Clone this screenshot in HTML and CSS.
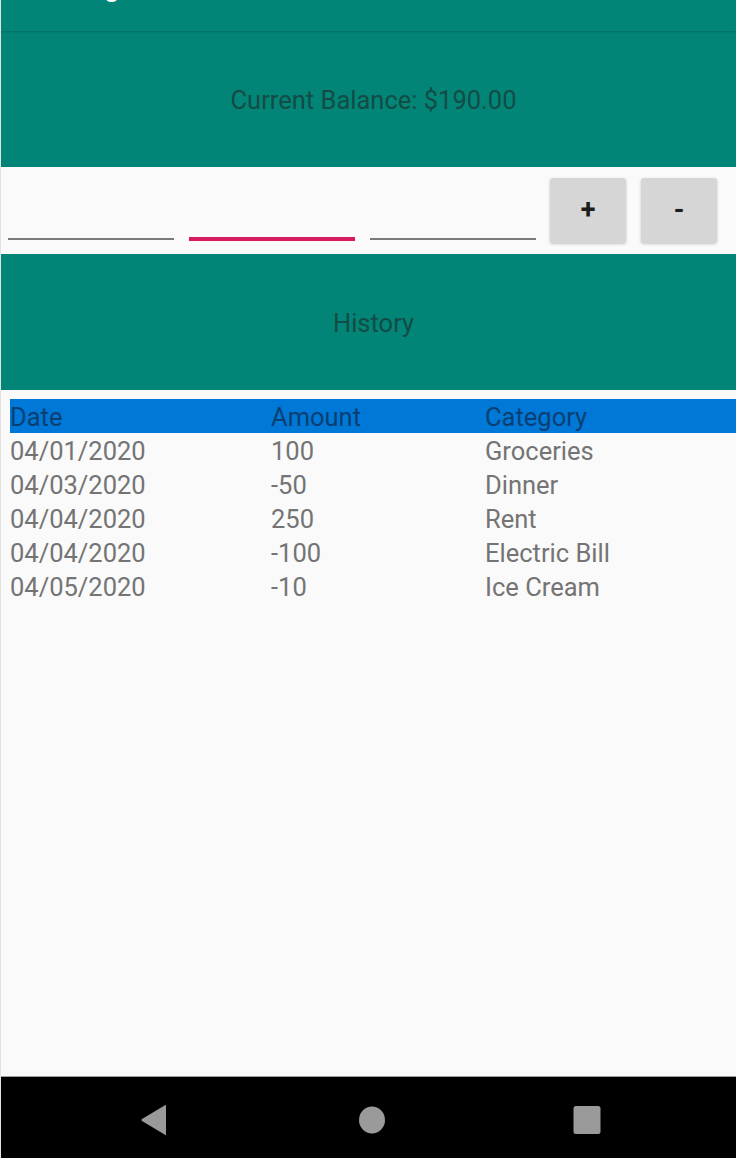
FILE: index.html
```html
<!DOCTYPE html>
<html>
<head>
<meta charset="utf-8">
<link rel="stylesheet" href="styles.css">
</head>
<body>
<div class="app">
  <header class="toolbar"><span class="title">Budget</span></header>
  <section class="band balance">Current Balance: $190.00</section>
  <section class="inputs">
    <div class="field"></div>
    <div class="field focused"></div>
    <div class="field"></div>
    <button class="btn plus">+</button>
    <button class="btn minus">-</button>
  </section>
  <section class="band history">History</section>
  <section class="table-wrap">
    <div class="table">
      <div class="row head"><span>Date</span><span>Amount</span><span>Category</span></div>
      <div class="row"><span>04/01/2020</span><span>100</span><span>Groceries</span></div>
      <div class="row"><span>04/03/2020</span><span>-50</span><span>Dinner</span></div>
      <div class="row"><span>04/04/2020</span><span>250</span><span>Rent</span></div>
      <div class="row"><span>04/04/2020</span><span>-100</span><span>Electric Bill</span></div>
      <div class="row"><span>04/05/2020</span><span>-10</span><span>Ice Cream</span></div>
    </div>
  </section>
  <nav class="navbar">
    <svg class="nav-icon back" width="30" height="32" viewBox="0 0 30 32"><path d="M27 1.5 L27 30.5 Q27 31.5 26 30.8 L3 17 Q1.5 16 3 15 L26 1.2 Q27 0.5 27 1.5 Z" fill="#9a9a9a"/></svg>
    <svg class="nav-icon home" width="28" height="28" viewBox="0 0 28 28"><ellipse cx="14" cy="14" rx="13" ry="13.5" fill="#9a9a9a"/></svg>
    <svg class="nav-icon recent" width="28" height="28" viewBox="0 0 28 28"><rect x="0.5" y="0" width="27" height="28" rx="2.5" fill="#9a9a9a"/></svg>
  </nav>
</div>
</body>
</html>
```

FILE: styles.css
```css
* { box-sizing: border-box; }
html, body { margin: 0; padding: 0; }
body {
  background: #fafafa;
  font-family: Roboto, "Noto Sans", sans-serif;
}
.app {
  width: 736px;
  height: 1158px;
  display: flex;
  flex-direction: column;
  border-left: 1px solid #e2e2e2;
  overflow: hidden;
}
.toolbar {
  height: 31px;
  flex: none;
  background: #028577;
  overflow: hidden;
  position: relative;
  z-index: 2;
  box-shadow: 0 1px 2px rgba(0, 0, 0, 0.18);
  padding-left: 54px;
}
.title {
  display: block;
  color: #ffffff;
  font-size: 28px;
  font-weight: 500;
  line-height: 1;
  margin-top: -27px;
}
.band {
  height: 136px;
  flex: none;
  background: #028577;
  display: flex;
  align-items: center;
  justify-content: center;
  padding-left: 10px;
  padding-top: 2px;
  color: #134c45;
  font-size: 25.5px;
}
.inputs {
  height: 87px;
  flex: none;
  display: flex;
  align-items: flex-start;
  padding-left: 7px;
}
.field {
  width: 166px;
  height: 73px;
  margin-right: 15px;
  border-bottom: 2px solid #7a7a7a;
}
.field.focused {
  height: 74px;
  border-bottom: 4px solid #d81b60;
}
.field:nth-child(3) { margin-right: 14px; }
.btn {
  width: 76px;
  height: 65px;
  margin-top: 11px;
  margin-right: 15px;
  border: none;
  border-radius: 3px;
  background: #d6d6d6;
  box-shadow: 0 1px 3px rgba(0, 0, 0, 0.22);
  font-family: Roboto, sans-serif;
  font-size: 27px;
  font-weight: 700;
  line-height: 1;
  color: #1d1d1d;
  padding: 0;
}
.table-wrap {
  flex: 1;
  padding: 9px 0 0 9px;
}
.row {
  display: grid;
  grid-template-columns: 261px 214px 1fr;
  height: 34px;
  line-height: 36px;
  font-size: 25.5px;
  color: #747474;
}
.row.head {
  background: #0078d7;
  color: #0b3f72;
}
.navbar {
  height: 82px;
  flex: none;
  background: #000;
  border-top: 1px solid #9e9e9e;
  display: flex;
  align-items: center;
  padding-left: 138px;
  padding-top: 4px;
}
.nav-icon { display: block; flex: none; }
.back { margin-right: 189px; }
.home { margin-right: 187px; }
```
